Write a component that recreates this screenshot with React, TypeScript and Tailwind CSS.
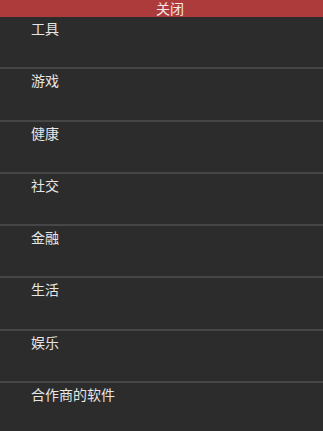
import React from "react";

const items = ["工具", "游戏", "健康", "社交", "金融", "生活", "娱乐", "合作商的软件"];

export default function App() {
  return (
    <div
      className="w-[323px] h-[431px] overflow-hidden bg-[#2c2c2c] flex flex-col"
      style={{ fontFamily: '"Noto Sans CJK SC", "Noto Sans", sans-serif' }}
    >
      <div className="h-[17px] shrink-0 bg-[#ae3b3b] flex items-center justify-center pl-[17px] text-[14px] leading-[17px] text-[#f4e6e6]">
        关闭
      </div>
      {items.map((t, i) => (
        <div
          key={t}
          className={
            i < items.length - 1
              ? "h-[52.3px] shrink-0 border-b-2 border-[#464646] pl-[31px] pt-[1px] text-[14px] leading-[20px] text-[#e6e6e6]"
              : "h-[52.3px] shrink-0 pl-[31px] pt-[1px] text-[14px] leading-[20px] text-[#e6e6e6]"
          }
        >
          {t}
        </div>
      ))}
    </div>
  );
}
